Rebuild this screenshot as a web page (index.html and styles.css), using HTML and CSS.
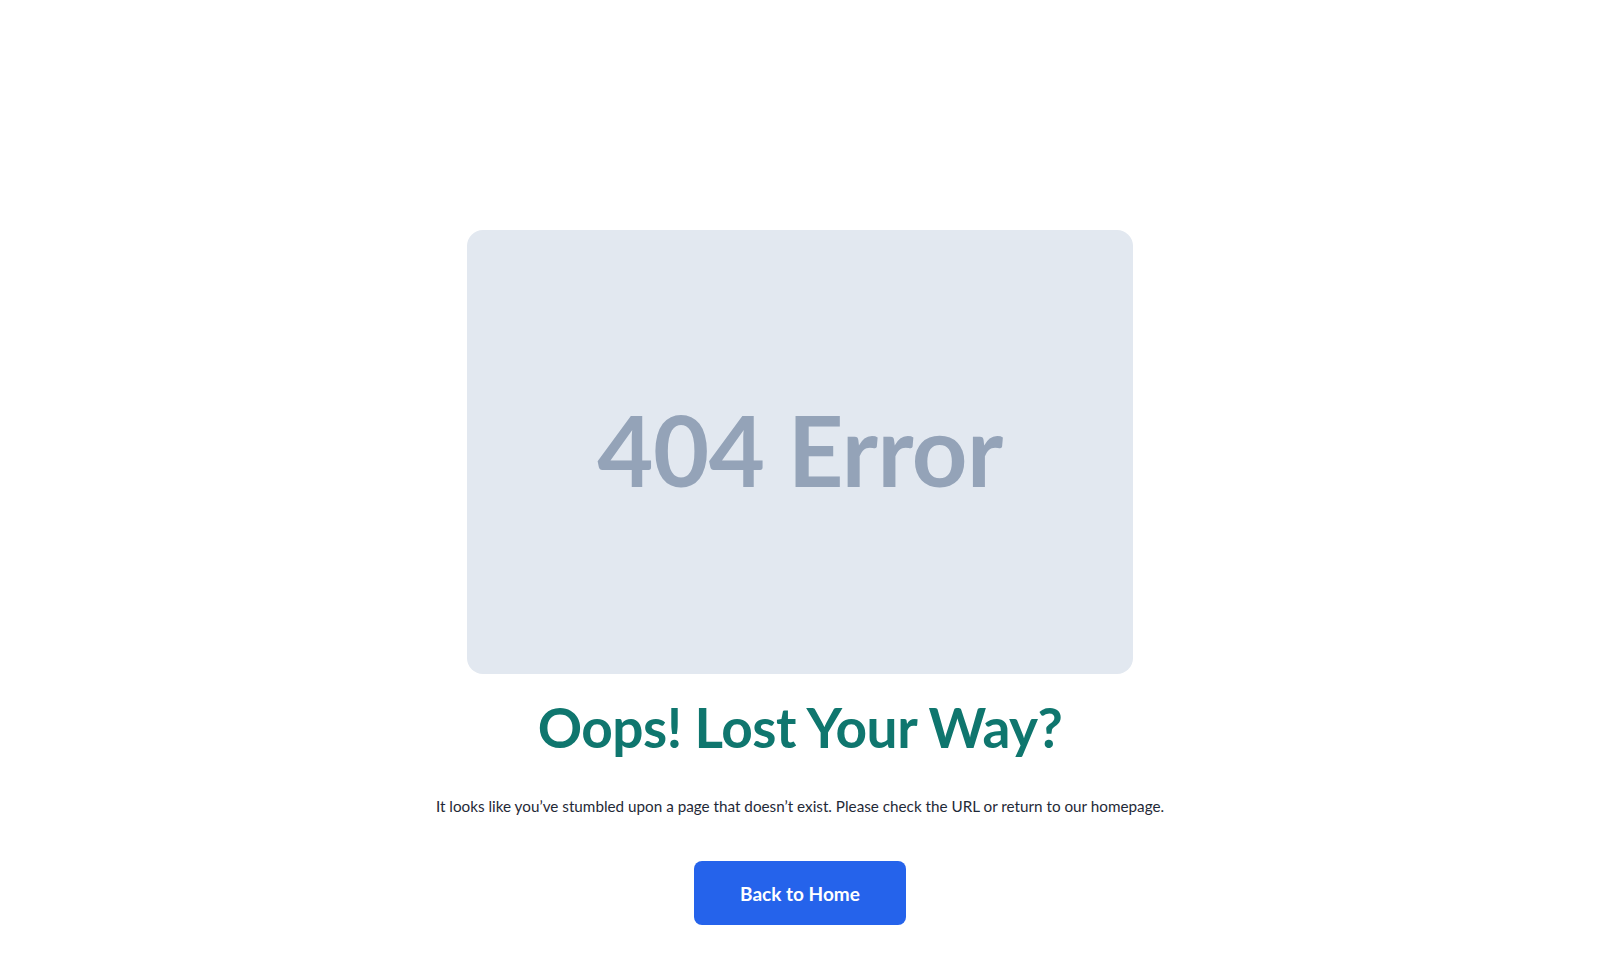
FILE: index.html
```html
<!DOCTYPE html>
<html lang="en">
<head>
<meta charset="utf-8">
<title>Page Not Found</title>
<link rel="stylesheet" href="styles.css">
</head>
<body>
  <main class="notfound">
    <div class="notfound__art">
      <span class="notfound__code">404 Error</span>
    </div>
    <h1 class="notfound__title">Oops! Lost Your Way?</h1>
    <p class="notfound__text">It looks like you’ve stumbled upon a page that doesn’t exist. Please check the URL or return to our homepage.</p>
    <a class="notfound__btn" href="#">Back to Home</a>
  </main>
</body>
</html>
```

FILE: styles.css
```css
* {
  box-sizing: border-box;
}

html, body {
  margin: 0;
  padding: 0;
  background: #ffffff;
}

body {
  font-family: Lato, "Noto Sans", sans-serif;
  color: #1f2937;
}

.notfound {
  display: flex;
  flex-direction: column;
  align-items: center;
  padding-top: 230px;
}

.notfound__art {
  width: 666px;
  height: 444px;
  padding-bottom: 6px;
  border-radius: 16px;
  background: #e2e8f0;
  display: flex;
  align-items: center;
  justify-content: center;
}

.notfound__code {
  font-family: Lato, "Liberation Sans", sans-serif;
  font-weight: 700;
  font-size: 97px;
  line-height: 1;
  color: #94a3b8;
  letter-spacing: -0.5px;
}

.notfound__title {
  margin: 21px 0 0;
  font-size: 55px;
  line-height: 64px;
  font-weight: 700;
  color: #0f766e;
  letter-spacing: -0.5px;
}

.notfound__text {
  margin: 35px 0 0;
  font-size: 15.25px;
  line-height: 24px;
  color: #1f2937;
}

.notfound__btn {
  margin-top: 43px;
  display: inline-flex;
  align-items: center;
  justify-content: center;
  width: 212px;
  height: 64px;
  border-radius: 8px;
  background: #2563eb;
  color: #ffffff;
  font-size: 19px;
  font-weight: 700;
  text-decoration: none;
}
```
